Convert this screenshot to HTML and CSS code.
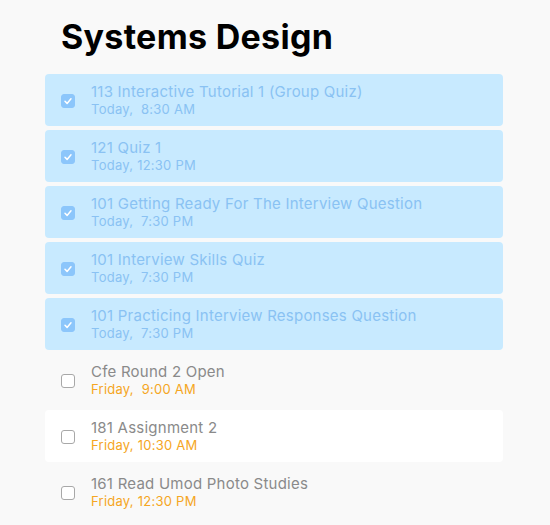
FILE: index.html
```html
<!DOCTYPE html>
<html>
<head>
<meta charset="utf-8">
<link rel="stylesheet" href="styles.css">
</head>
<body>
<div class="page">
  <h1 class="title">Systems Design</h1>
  <ul class="list">
    <li class="row done"><span class="box"><svg viewBox="0 0 14 14" width="14" height="14"><path d="M4 7.3 L6.1 9.4 L10 4.8" fill="none" stroke="#fff" stroke-width="1.5" stroke-linecap="round" stroke-linejoin="round"/></svg></span><div class="text"><div class="name">113 Interactive Tutorial 1 (Group Quiz)</div><div class="when">Today,&nbsp; 8:30 AM</div></div></li>
    <li class="row done"><span class="box"><svg viewBox="0 0 14 14" width="14" height="14"><path d="M4 7.3 L6.1 9.4 L10 4.8" fill="none" stroke="#fff" stroke-width="1.5" stroke-linecap="round" stroke-linejoin="round"/></svg></span><div class="text"><div class="name">121 Quiz 1</div><div class="when">Today, 12:30 PM</div></div></li>
    <li class="row done"><span class="box"><svg viewBox="0 0 14 14" width="14" height="14"><path d="M4 7.3 L6.1 9.4 L10 4.8" fill="none" stroke="#fff" stroke-width="1.5" stroke-linecap="round" stroke-linejoin="round"/></svg></span><div class="text"><div class="name">101 Getting Ready For The Interview Question</div><div class="when">Today,&nbsp; 7:30 PM</div></div></li>
    <li class="row done"><span class="box"><svg viewBox="0 0 14 14" width="14" height="14"><path d="M4 7.3 L6.1 9.4 L10 4.8" fill="none" stroke="#fff" stroke-width="1.5" stroke-linecap="round" stroke-linejoin="round"/></svg></span><div class="text"><div class="name">101 Interview Skills Quiz</div><div class="when">Today,&nbsp; 7:30 PM</div></div></li>
    <li class="row done"><span class="box"><svg viewBox="0 0 14 14" width="14" height="14"><path d="M4 7.3 L6.1 9.4 L10 4.8" fill="none" stroke="#fff" stroke-width="1.5" stroke-linecap="round" stroke-linejoin="round"/></svg></span><div class="text"><div class="name">101 Practicing Interview Responses Question</div><div class="when">Today,&nbsp; 7:30 PM</div></div></li>
    <li class="row"><span class="box"></span><div class="text"><div class="name">Cfe Round 2 Open</div><div class="when">Friday,&nbsp; 9:00 AM</div></div></li>
    <li class="row hover"><span class="box"></span><div class="text"><div class="name">181 Assignment 2</div><div class="when">Friday, 10:30 AM</div></div></li>
    <li class="row"><span class="box"></span><div class="text"><div class="name">161 Read Umod Photo Studies</div><div class="when">Friday, 12:30 PM</div></div></li>
  </ul>
</div>
</body>
</html>
```
FILE: styles.css
```css
html, body {
  margin: 0;
  padding: 0;
  background: #f9f9f9;
  font-family: Inter, "Liberation Sans", Arial, sans-serif;
}
.page {
  width: 550px;
  height: 525px;
  overflow: hidden;
  padding: 0 47px 0 45px;
  box-sizing: border-box;
}
.title {
  margin: 0;
  padding: 17px 0 0 16px;
  height: 74px;
  box-sizing: border-box;
  font-size: 34px;
  font-weight: bold;
  color: #000;
  line-height: 40px;
  letter-spacing: 0.3px;
}
.list {
  list-style: none;
  margin: 0;
  padding: 0;
  display: flex;
  flex-direction: column;
  gap: 4px;
}
.row {
  height: 52px;
  border-radius: 4px;
  display: flex;
  align-items: center;
  padding-left: 16px;
  box-sizing: border-box;
}
.row.done { background: #c8eaff; }
.row.hover { background: #ffffff; }
.box {
  width: 14px;
  height: 14px;
  box-sizing: border-box;
  border: 1px solid #a8a8a8;
  border-radius: 3px;
  background: #fff;
  flex: none;
  margin-right: 16px;
  margin-top: 1px;
  display: flex;
}
.row.done .box {
  background: #8cc6fb;
  border-color: #8cc6fb;
}
.box svg { display: block; margin: -1px; }
.text {
  display: flex;
  flex-direction: column;
  padding-top: 1px;
}
.name {
  font-size: 15px;
  line-height: 18px;
  letter-spacing: 0.23px;
  color: #8a8a8a;
}
.when {
  font-size: 13px;
  line-height: 17px;
  letter-spacing: 0.25px;
  color: #f5a623;
}
.row.done .name, .row.done .when { color: #8ac2f3; }
```
